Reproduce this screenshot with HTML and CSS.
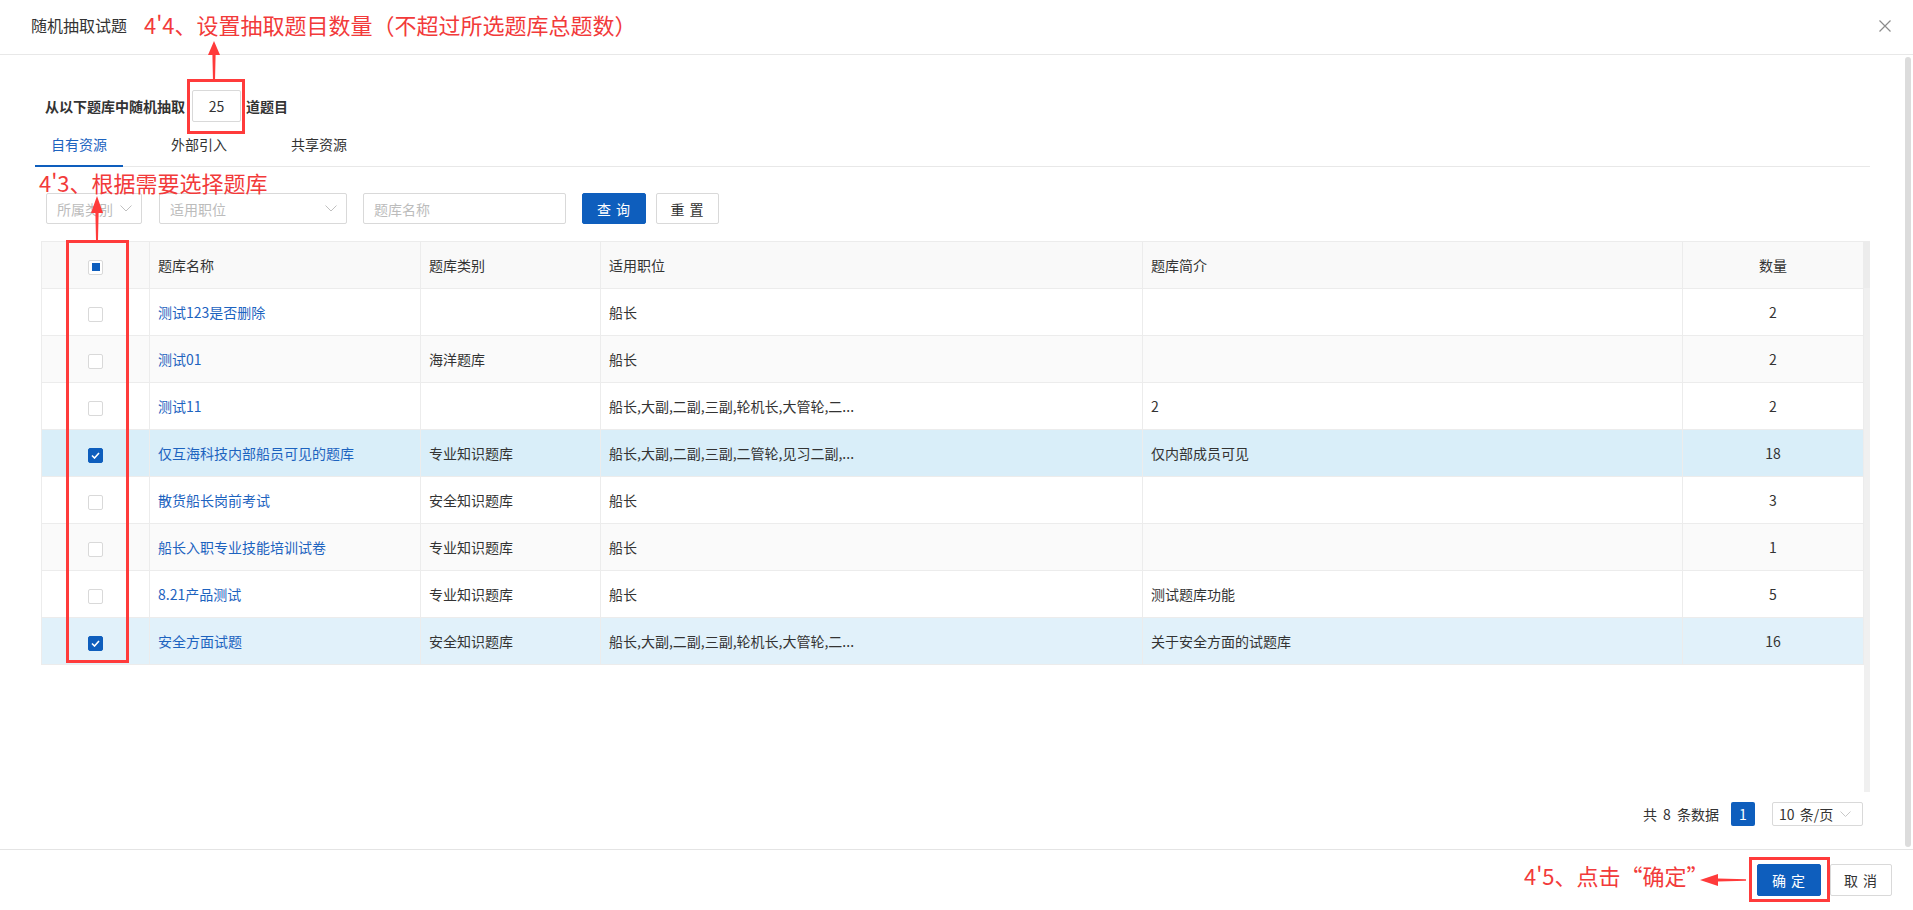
FILE: index.html
```html
<!DOCTYPE html>
<html lang="zh-CN">
<head>
<meta charset="utf-8">
<title>随机抽取试题</title>
<link rel="stylesheet" href="styles.css">
</head>
<body>
<div class="dialog">
  <header class="dlg-header">
    <span class="dlg-title">随机抽取试题</span>
    <svg class="close" width="12" height="12" viewBox="0 0 12 12"><path d="M0.5 0.5 L11.5 11.5 M11.5 0.5 L0.5 11.5" stroke="#8c8c8c" stroke-width="1.2" fill="none"/></svg>
  </header>
  <main class="dlg-body">
    <div class="count-row">
      <span class="count-label">从以下题库中随机抽取</span>
      <div class="count-input">25</div>
      <span class="count-label">道题目</span>
    </div>
    <div class="tabs">
      <div class="tab active">自有资源</div>
      <div class="tab">外部引入</div>
      <div class="tab">共享资源</div>
    </div>
    <div class="filters">
      <div class="select sel-cat"><span>所属类别</span><svg width="12" height="7" viewBox="0 0 12 7"><path d="M0.5 0.5 L6 6 L11.5 0.5" stroke="#c0c0c0" fill="none"/></svg></div>
      <div class="select sel-pos"><span>适用职位</span><svg width="12" height="7" viewBox="0 0 12 7"><path d="M0.5 0.5 L6 6 L11.5 0.5" stroke="#c0c0c0" fill="none"/></svg></div>
      <div class="select sel-name"><span>题库名称</span></div>
      <button class="btn primary btn-query">查 询</button>
      <button class="btn btn-reset">重 置</button>
    </div>
    <div class="table-wrap">
      <table class="grid">
        <colgroup>
          <col class="c-chk"><col class="c-name"><col class="c-cat"><col class="c-pos"><col class="c-intro"><col class="c-num">
        </colgroup>
        <thead>
          <tr><th class="chk"><span class="cb indet"><i></i></span></th><th>题库名称</th><th>题库类别</th><th>适用职位</th><th>题库简介</th><th class="num">数量</th></tr>
        </thead>
        <tbody>
          <tr><td class="chk"><span class="cb"></span></td><td class="link">测试123是否删除</td><td></td><td>船长</td><td></td><td class="num">2</td></tr>
          <tr class="even"><td class="chk"><span class="cb"></span></td><td class="link">测试01</td><td>海洋题库</td><td>船长</td><td></td><td class="num">2</td></tr>
          <tr><td class="chk"><span class="cb"></span></td><td class="link">测试11</td><td></td><td>船长,大副,二副,三副,轮机长,大管轮,二...</td><td>2</td><td class="num">2</td></tr>
          <tr class="sel sel-a"><td class="chk"><span class="cb on"><svg width="9" height="7" viewBox="0 0 9 7"><path d="M1 3.5 L3.5 6 L8 1" stroke="#fff" stroke-width="1.6" fill="none"/></svg></span></td><td class="link">仅互海科技内部船员可见的题库</td><td>专业知识题库</td><td>船长,大副,二副,三副,二管轮,见习二副,...</td><td>仅内部成员可见</td><td class="num">18</td></tr>
          <tr><td class="chk"><span class="cb"></span></td><td class="link">散货船长岗前考试</td><td>安全知识题库</td><td>船长</td><td></td><td class="num">3</td></tr>
          <tr class="even"><td class="chk"><span class="cb"></span></td><td class="link">船长入职专业技能培训试卷</td><td>专业知识题库</td><td>船长</td><td></td><td class="num">1</td></tr>
          <tr><td class="chk"><span class="cb"></span></td><td class="link">8.21产品测试</td><td>专业知识题库</td><td>船长</td><td>测试题库功能</td><td class="num">5</td></tr>
          <tr class="sel sel-b"><td class="chk"><span class="cb on"><svg width="9" height="7" viewBox="0 0 9 7"><path d="M1 3.5 L3.5 6 L8 1" stroke="#fff" stroke-width="1.6" fill="none"/></svg></span></td><td class="link">安全方面试题</td><td>安全知识题库</td><td>船长,大副,二副,三副,轮机长,大管轮,二...</td><td>关于安全方面的试题库</td><td class="num">16</td></tr>
        </tbody>
      </table>
      <div class="gutter"><div class="gutter-head"></div></div>
    </div>
    <div class="pager">
      <span class="total">共 8 条数据</span>
      <span class="page-num">1</span>
      <div class="page-size"><span>10 条/页</span><svg width="11" height="6" viewBox="0 0 11 6"><path d="M0.5 0.5 L5.5 5.5 L10.5 0.5" stroke="#c8c8c8" fill="none"/></svg></div>
    </div>
    <div class="scroll-thumb"></div>
  </main>
  <footer class="dlg-footer">
    <button class="btn primary btn-ok">确 定</button>
    <button class="btn btn-cancel">取 消</button>
  </footer>
</div>

<div class="annot">
  <div class="note note-1">4'4、设置抽取题目数量（不超过所选题库总题数）</div>
  <svg class="arrow arrow-1" width="14" height="40" viewBox="0 0 14 40"><polygon points="7,0 13,14 8.6,14 8,40 6,40 5.4,14 1,14" fill="#ff3b3b"/></svg>
  <div class="rbox rbox-1"></div>
  <div class="note note-2">4'3、根据需要选择题库</div>
  <svg class="arrow arrow-2" width="14" height="44" viewBox="0 0 14 44"><polygon points="7,0 13,17 8.6,17 8,44 6,44 5.4,17 1,17" fill="#ff3b3b"/></svg>
  <div class="rbox rbox-2"></div>
  <div class="note note-3">4'5、点击“确定”</div>
  <svg class="arrow arrow-3" width="46" height="14" viewBox="0 0 46 14"><polygon points="0,7 18,1 18,5.4 46,6.2 46,7.8 18,8.6 18,13" fill="#ff3b3b"/></svg>
  <div class="rbox rbox-3"></div>
</div>
</body>
</html>
```

FILE: styles.css
```css
* { box-sizing: border-box; }
html, body {
  margin: 0;
  padding: 0;
  width: 1913px;
  height: 910px;
  overflow: hidden;
  background: #fff;
  font-family: "Noto Sans CJK SC", "Noto Sans", sans-serif;
  color: #333;
  font-size: 14px;
}
.dialog {
  width: 1913px;
  height: 910px;
  display: flex;
  flex-direction: column;
  background: #fff;
}
.dlg-header {
  height: 55px;
  flex: none;
  display: flex;
  align-items: center;
  padding: 0 22px 0 31px;
  border-bottom: 1px solid #e8e8e8;
}
.dlg-title {
  font-size: 16px;
  color: #333;
  line-height: 20px;
  margin-top: -4px;
}
.close {
  margin-left: auto;
  margin-top: -3px;
}
.dlg-body {
  position: relative;
  height: 794px;
  flex: none;
  padding: 35px 43px 0 41px;
  overflow: hidden;
}
.count-row {
  display: flex;
  align-items: center;
  height: 32px;
  margin-left: 4px;
}
.count-label {
  font-weight: 700;
  font-size: 14px;
  color: #333;
}
.count-input {
  width: 49px;
  height: 32px;
  margin: 0 5px 0 7px;
  border: 1px solid #d9d9d9;
  border-radius: 2px;
  display: flex;
  align-items: center;
  justify-content: center;
  font-size: 14px;
  color: #333;
}
.tabs {
  display: flex;
  gap: 32px;
  height: 45px;
  margin-left: -6px;
  border-bottom: 1px solid #e8e8e8;
}
.tab {
  position: relative;
  width: 88px;
  text-align: center;
  line-height: 44px;
  font-size: 14px;
  color: #333;
}
.tab.active { color: #1d63bf; }
.tab.active::after {
  content: "";
  position: absolute;
  left: 0;
  right: 0;
  bottom: -1px;
  height: 2px;
  background: #0e5ebd;
}
.filters {
  display: flex;
  align-items: center;
  height: 31px;
  margin: 26px 0 0 5px;
}
.select {
  height: 31px;
  border: 1px solid #d9d9d9;
  border-radius: 2px;
  display: flex;
  align-items: center;
  justify-content: space-between;
  padding: 0 9px 0 10px;
  color: #bcbcbc;
  font-size: 14px;
}
.sel-cat { width: 96px; margin-right: 17px; }
.sel-pos { width: 188px; margin-right: 16px; }
.sel-name { width: 203px; margin-right: 16px; }
.btn {
  font-family: inherit;
  font-size: 14px;
  height: 31px;
  border: 1px solid #d9d9d9;
  border-radius: 2px;
  background: #fff;
  color: #333;
  padding: 0;
  letter-spacing: 1px;
}
.btn.primary {
  background: #0e5ebd;
  border-color: #0e5ebd;
  color: #fff;
}
.btn-query { width: 64px; margin-right: 10px; }
.btn-reset { width: 63px; }
.table-wrap {
  display: flex;
  margin-top: 17px;
  height: 551px;
}
.grid {
  width: 1822px;
  table-layout: fixed;
  border-collapse: collapse;
  align-self: flex-start;
}
.c-chk { width: 108px; }
.c-name { width: 271px; }
.c-cat { width: 180px; }
.c-pos { width: 542px; }
.c-intro { width: 540px; }
.c-num { width: 181px; }
.grid th, .grid td {
  height: 47px;
  border: 1px solid #ececec;
  padding: 0 8px;
  text-align: left;
  font-weight: 400;
  font-size: 14px;
  color: #333;
  white-space: nowrap;
  overflow: hidden;
}
.grid th { background: #f9f9f9; }
.grid tr.even td { background: #fafafa; }
.grid tr.sel-a td { background: #d9eef9; }
.grid tr.sel-b td { background: #e1f1fa; }
.grid .chk { text-align: center; padding: 0; }
.grid .num { text-align: center; }
.grid td.link { color: #1d63bf; }
.cb {
  display: inline-flex;
  align-items: center;
  justify-content: center;
  width: 15px;
  height: 15px;
  border: 1px solid #d9d9d9;
  border-radius: 2px;
  background: #fff;
  vertical-align: middle;
}
.cb.indet i {
  display: block;
  width: 8px;
  height: 8px;
  background: #0e5ebd;
}
.cb.on {
  background: #0e5ebd;
  border-color: #0e5ebd;
}
.gutter {
  width: 7px;
  height: 551px;
  background: #f0f0f0;
}
.gutter-head {
  height: 47px;
  background: #ececec;
}
.pager {
  display: flex;
  align-items: center;
  justify-content: flex-end;
  height: 24px;
  margin-top: 10px;
  padding-right: 7px;
  font-size: 14px;
}
.total { margin-right: 12px; color: #333; word-spacing: 3px; }
.page-num {
  width: 24px;
  height: 24px;
  background: #0e5ebd;
  color: #fff;
  border-radius: 2px;
  display: flex;
  align-items: center;
  justify-content: center;
  margin-right: 17px;
}
.page-size {
  width: 91px;
  height: 24px;
  border: 1px solid #d9d9d9;
  border-radius: 2px;
  display: flex;
  align-items: center;
  justify-content: space-between;
  padding: 0 11px 0 6px;
  word-spacing: 2px;
}
.scroll-thumb {
  position: absolute;
  right: 2px;
  top: 2px;
  width: 6px;
  height: 790px;
  border-radius: 3px;
  background: #dcdcdc;
}
.dlg-footer {
  flex: 1;
  border-top: 1px solid #e4e4e4;
  display: flex;
  justify-content: flex-end;
  align-items: flex-start;
  padding: 14px 21px 0 0;
  gap: 9px;
}
.btn-ok { width: 64px; height: 32px; }
.btn-cancel { width: 62px; height: 32px; }

/* annotation overlay */
.annot {
  position: absolute;
  left: 0;
  top: 0;
  width: 1913px;
  height: 910px;
  pointer-events: none;
}
.note {
  position: absolute;
  font-size: 22px;
  line-height: 24px;
  color: #f23a3a;
  white-space: nowrap;
}
.note-1 { left: 144px; top: 12px; }
.note-2 { left: 39px; top: 170px; }
.note-3 { left: 1524px; top: 863px; }
.arrow { position: absolute; }
.arrow-1 { left: 207px; top: 41px; }
.arrow-2 { left: 90px; top: 196px; }
.arrow-3 { left: 1700px; top: 873px; }
.rbox {
  position: absolute;
  border: 3px solid #ff3b3b;
}
.rbox-1 { left: 187px; top: 79px; width: 58px; height: 55px; }
.rbox-2 { left: 66px; top: 240px; width: 63px; height: 423px; }
.rbox-3 { left: 1749px; top: 857px; width: 81px; height: 45px; }
```
